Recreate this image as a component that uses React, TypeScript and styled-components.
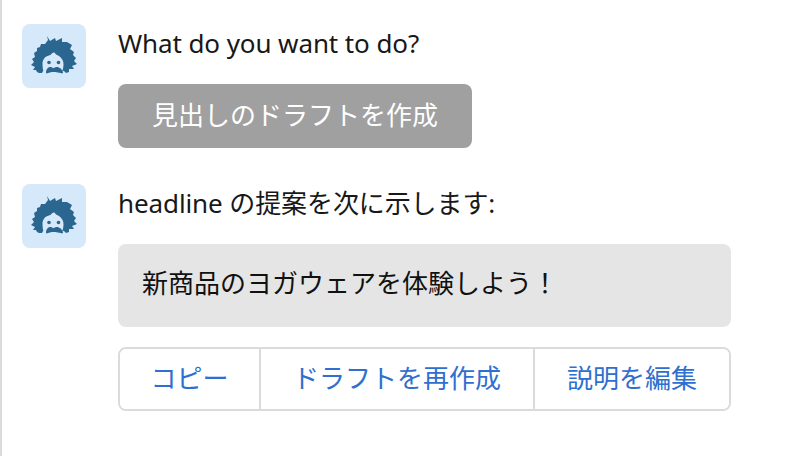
import { createGlobalStyle, styled } from 'styled-components';

const GlobalStyle = createGlobalStyle`
  html, body {
    margin: 0;
    padding: 0;
    background: #fff;
    font-family: "Noto Sans", "Noto Sans CJK JP", sans-serif;
  }
`;

const EinsteinIcon = () => (
  <svg width="64" height="64" viewBox="0 0 64 64">
    <path
      fill="#2a6690"
      d="M25 12l3 5 5-3 1 3 6-3 0 4 5 0 5 3-2 4 4 3-1 3 3 3-2 3 3 3-5 2 2 3-5 0 0 3-3 1-2-2-1 0H21l-1 2-3 0-2-1-1-2-3 0 2-3-4-2 3-3-2-3 3-2-1-4 3-2 0-3 3-1 1-3 4 0 3-4z"
    />
    <path
      fill="#d5e9fb"
      d="M32 28c1 2 3 3 5 4 3 2 4.500 5 4.500 8 0 3-.5 6-2 9.500H22.500c-1.500-2-2-6.500-2-9.500 0-4 2-7 5-8 2-.5 4-1 4.500-3 1 0 1.500 0 2-1z"
    />
    <circle cx="27" cy="38.500" r="1.800" fill="#2a6690" />
    <circle cx="36.500" cy="38.500" r="1.800" fill="#2a6690" />
    <path
      fill="#2a6690"
      d="M24 48.500c0-3 1.800-5.500 4.200-5.500 1.200 0 2.300.6 3.300 1.300 1-.7 2-1.300 3.200-1.300 2.800 0 5.800 2.500 6.300 5.300.1 1-.8 1.300-1.800 1-2-.6-5-1.300-7.700-1.300-2.500 0-4.500.7-6 1.300-1 .3-1.500 0-1.500-.8z"
    />
  </svg>
);

const App = () => (
  <>
    <GlobalStyle />
    <SPanel>
      <SRow>
        <SAvatar>
          <EinsteinIcon />
        </SAvatar>
        <SBody>
          <SMessage>What do you want to do?</SMessage>
          <SPrompt type="button">見出しのドラフトを作成</SPrompt>
        </SBody>
      </SRow>
      <SRow>
        <SAvatar>
          <EinsteinIcon />
        </SAvatar>
        <SBody>
          <SMessage>headline の提案を次に示します:</SMessage>
          <SBubble>新商品のヨガウェアを体験しよう！</SBubble>
          <SActions>
            <SAction type="button" $width={141}>コピー</SAction>
            <SAction type="button" $width={274}>ドラフトを再作成</SAction>
            <SAction type="button" $width={196}>説明を編集</SAction>
          </SActions>
        </SBody>
      </SRow>
    </SPanel>
  </>
);

const SPanel = styled.main`
  box-sizing: border-box;
  width: 800px;
  height: 456px;
  padding: 24px 0 0 20px;
  border-left: 2px solid #dddbda;
  overflow: hidden;
  display: flex;
  flex-direction: column;
  gap: 36px;
`;

const SRow = styled.section`
  display: flex;
  gap: 32px;
`;

const SAvatar = styled.div`
  width: 64px;
  height: 64px;
  flex-shrink: 0;
  display: flex;
  border-radius: 8px;
  background-color: #d5e9fb;
`;

const SBody = styled.div`
  width: 613px;
  display: flex;
  flex-direction: column;
  align-items: flex-start;
`;

const SMessage = styled.p`
  margin: 0 0 20px;
  height: 40px;
  line-height: 38px;
  font-size: 26px;
  letter-spacing: -0.1px;
  color: #181818;
`;

const SPrompt = styled.button`
  width: 354px;
  height: 64px;
  padding: 0 0 4px;
  border: 0;
  border-radius: 8px;
  background-color: #a0a0a0;
  color: #fff;
  font-family: inherit;
  font-size: 26px;
`;

const SBubble = styled.div`
  box-sizing: border-box;
  width: 100%;
  height: 83px;
  padding: 0 24px 8px;
  display: flex;
  align-items: center;
  border-radius: 8px;
  background-color: #e5e5e5;
  color: #111;
  font-size: 26px;
`;

const SActions = styled.div`
  box-sizing: border-box;
  width: 100%;
  height: 64px;
  margin-top: 20px;
  display: flex;
  border: 2px solid #dddbda;
  border-radius: 8px;
  overflow: hidden;
`;

const SAction = styled.button<{ $width: number }>`
  width: ${props => props.$width}px;
  padding: 0 0 4px;
  border: 0;
  border-right: 2px solid #dddbda;
  background: #fff;
  color: #2e6fd0;
  font-family: inherit;
  font-size: 26px;
  &:last-child {
    flex: 1;
    border-right: 0;
  }
`;

export default App;
